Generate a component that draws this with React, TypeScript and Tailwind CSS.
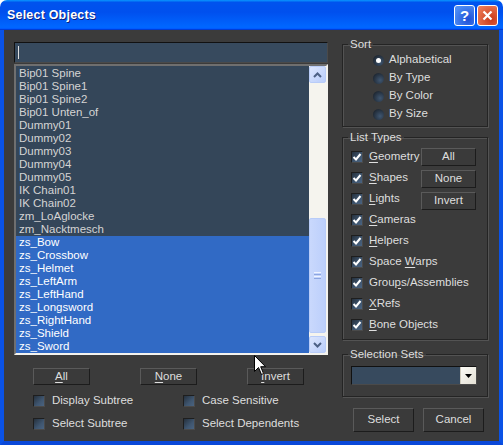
import React from "react";

const FONT = { fontFamily: '"Liberation Sans", Arial, sans-serif' };

const ITEMS = [
  "Bip01 Spine",
  "Bip01 Spine1",
  "Bip01 Spine2",
  "Bip01 Unten_of",
  "Dummy01",
  "Dummy02",
  "Dummy03",
  "Dummy04",
  "Dummy05",
  "IK Chain01",
  "IK Chain02",
  "zm_LoAglocke",
  "zm_Nacktmesch",
  "zs_Bow",
  "zs_Crossbow",
  "zs_Helmet",
  "zs_LeftArm",
  "zs_LeftHand",
  "zs_Longsword",
  "zs_RightHand",
  "zs_Shield",
  "zs_Sword",
];

const LIST_TYPES: [string, string, string][] = [
  ["", "G", "eometry"],
  ["", "S", "hapes"],
  ["", "L", "ights"],
  ["", "C", "ameras"],
  ["", "H", "elpers"],
  ["Space ", "W", "arps"],
  ["Grou", "p", "s/Assemblies"],
  ["", "X", "Refs"],
  ["", "B", "one Objects"],
];

function Btn({ children, className = "" }: { children: React.ReactNode; className?: string }) {
  return (
    <div
      className={
        "flex items-center justify-center bg-[#3a3a3a] border border-t-[#5a5a5a] border-l-[#5a5a5a] border-b-[#1c1c1c] border-r-[#1c1c1c] text-[11.5px] text-[#dedede] " +
        className
      }
    >
      {children}
    </div>
  );
}

function CheckBox({ checked }: { checked?: boolean }) {
  return (
    <div className="w-[12px] h-[12px] shrink-0 bg-[linear-gradient(135deg,#25303c,#3f5670_60%,#4a6380)] border border-t-[#1e1e1e] border-l-[#1e1e1e] border-b-[#4a4a4a] border-r-[#4a4a4a] flex items-center justify-center">
      {checked && (
        <svg width="10" height="10" viewBox="0 0 10 10">
          <path d="M1.5 5 L4 7.5 L8.5 2" stroke="#ffffff" strokeWidth="2" fill="none" />
        </svg>
      )}
    </div>
  );
}

function Radio({ on }: { on?: boolean }) {
  return (
    <div className="w-[11px] h-[11px] shrink-0 rounded-full bg-[radial-gradient(circle_at_65%_65%,#3f5670,#1f2833_75%)] flex items-center justify-center">
      {on && <div className="w-[5px] h-[5px] rounded-full bg-white" />}
    </div>
  );
}

function Group({ label, className = "", children }: { label: string; className?: string; children: React.ReactNode }) {
  return (
    <fieldset
      className={
        "min-w-0 w-[146px] border border-[#242424] shadow-[inset_1px_1px_0_#535353,1px_1px_0_#535353] " + className
      }
    >
      <legend className="ml-[5px] px-[2px] text-[11.5px] leading-[14px] text-[#dedede]">{label}</legend>
      {children}
    </fieldset>
  );
}

export default function App() {
  return (
    <div className="relative w-[503px] h-[445px] bg-white select-none overflow-hidden" style={FONT}>
      {/* Title bar */}
      <div className="h-[30px] rounded-t-[7px] bg-[linear-gradient(180deg,#0997ff,#0053ee_8%,#0050ee_40%,#0066ff_88%,#0066ff_93%,#005bff_95%,#003dd7_96%,#003dd7)] flex items-center pl-[7px] pr-[5px]">
        <span className="text-white font-bold text-[12.5px] tracking-[0.2px] [text-shadow:1px_1px_0_#0f1f7a]">
          Select Objects
        </span>
        <div className="ml-auto flex gap-[2px]">
          <div className="w-[21px] h-[21px] rounded-[3px] border border-white bg-[radial-gradient(circle_at_70%_70%,#1e4fd6,#4d8df5_80%)] flex items-center justify-center text-white font-bold text-[15px] leading-none">
            ?
          </div>
          <div className="w-[21px] h-[21px] rounded-[3px] border border-white bg-[radial-gradient(circle_at_70%_70%,#c8391a,#ec7a55_85%)] flex items-center justify-center">
            <svg width="11" height="11" viewBox="0 0 11 11">
              <path d="M1.5 1.5 L9.5 9.5 M9.5 1.5 L1.5 9.5" stroke="#ffffff" strokeWidth="2.2" />
            </svg>
          </div>
        </div>
      </div>

      {/* Body */}
      <div className="h-[415px] flex bg-[#3b3b3b] border-x-4 border-b-4 border-x-[#0a52e6] border-b-[#0a48d8]">
        {/* Left column */}
        <div className="w-[324px] pl-[10px] pt-[12px] flex flex-col">
          <div className="h-[21px] bg-[#374a5e] border border-t-[#111] border-l-[#111] border-b-[#4a4a4a] border-r-[#4a4a4a] flex items-center pl-[3px]">
            <div className="w-px h-[13px] bg-[#e0e0e0]" />
          </div>
          <div className="mt-[1px] h-[291px] border-2 border-t-[#6f6f6f] border-l-[#6f6f6f] border-b-[#f4f3ee] border-r-[#f4f3ee] flex">
            <div className="flex-1 bg-[#344659] pt-[1px]">
              {ITEMS.map((it, i) => (
                <div
                  key={it}
                  className={
                    "h-[13px] leading-[13px] pl-[3px] text-[11.5px] " +
                    (i >= 13 ? "bg-[#316ac5] text-white" : "text-[#d4d4d4]")
                  }
                >
                  {it}
                </div>
              ))}
            </div>
            <div className="w-[17px] bg-[#f5f4ee] flex flex-col">
              <div className="h-[17px] rounded-[2px] border border-[#b8ccf8] bg-[linear-gradient(135deg,#dce6fd,#b9cdfb)] flex items-center justify-center">
                <svg width="9" height="6" viewBox="0 0 9 6">
                  <path d="M1 5 L4.5 1.5 L8 5" stroke="#4d6185" strokeWidth="2" fill="none" />
                </svg>
              </div>
              <div className="h-[135px]" />
              <div className="h-[115px] rounded-[2px] border border-[#b8ccf8] bg-[linear-gradient(90deg,#c9d8fc,#bccffb)] flex flex-col items-center justify-center gap-[1px]">
                <div className="w-[7px] h-px bg-[#eef3ff]" />
                <div className="w-[7px] h-px bg-[#8ca5e0]" />
                <div className="w-[7px] h-px bg-[#eef3ff]" />
                <div className="w-[7px] h-px bg-[#8ca5e0]" />
              </div>
              <div className="flex-1" />
              <div className="h-[17px] rounded-[2px] border border-[#b8ccf8] bg-[linear-gradient(135deg,#dce6fd,#b9cdfb)] flex items-center justify-center">
                <svg width="9" height="6" viewBox="0 0 9 6">
                  <path d="M1 1 L4.5 4.5 L8 1" stroke="#4d6185" strokeWidth="2" fill="none" />
                </svg>
              </div>
            </div>
          </div>

          <div className="mt-[13px] pl-[19px] flex gap-[50px]">
            <Btn className="w-[57px] h-[17px]">
              <span className="underline underline-offset-2">A</span>ll
            </Btn>
            <Btn className="w-[57px] h-[17px]">
              <span className="underline underline-offset-2">N</span>one
            </Btn>
            <Btn className="w-[57px] h-[17px]">
              <span className="underline underline-offset-2">I</span>nvert
            </Btn>
          </div>

          <div className="mt-[7px] pl-[19px] grid grid-cols-[150px_1fr] gap-y-[6px] text-[11.5px] text-[#dedede]">
            <div className="h-[17px] flex items-center gap-[7px]">
              <CheckBox />
              <span>Display Subtree</span>
            </div>
            <div className="h-[17px] flex items-center gap-[7px]">
              <CheckBox />
              <span>Case Sensitive</span>
            </div>
            <div className="h-[17px] flex items-center gap-[7px]">
              <CheckBox />
              <span>Select Subtree</span>
            </div>
            <div className="h-[17px] flex items-center gap-[7px]">
              <CheckBox />
              <span>Select Dependents</span>
            </div>
          </div>
        </div>

        {/* Right column */}
        <div className="ml-[14px] w-[146px] pt-[7px] flex flex-col">
          <Group label="Sort" className="pb-[3px]">
            <div className="pl-[30px] text-[11.5px] text-[#dedede]">
              {["Alphabetical", "By Type", "By Color", "By Size"].map((s, i) => (
                <div key={s} className="h-[18px] flex items-center gap-[5px]">
                  <Radio on={i === 0} />
                  <span>{s}</span>
                </div>
              ))}
            </div>
          </Group>

          <Group label="List Types" className="mt-[3px] pb-[4px]">
            <div className="flex pl-[8px] pr-[11px] pt-[2px]">
              <div className="w-0 flex-1 flex flex-col text-[11.5px] text-[#dedede] whitespace-nowrap">
                {LIST_TYPES.map(([a, u, b]) => (
                  <div key={a + u + b} className="h-[21px] flex items-center gap-[6px]">
                    <CheckBox checked />
                    <span>
                      {a}
                      <span className="underline underline-offset-2">{u}</span>
                      {b}
                    </span>
                  </div>
                ))}
              </div>
              <div className="mt-[2px] flex flex-col gap-[4px]">
                <Btn className="w-[55px] h-[18px]">All</Btn>
                <Btn className="w-[55px] h-[18px]">None</Btn>
                <Btn className="w-[55px] h-[18px]">Invert</Btn>
              </div>
            </div>
          </Group>

          <Group label="Selection Sets" className="mt-[7px] pb-[11px]">
            <div className="pl-[8px] pr-[10px] pt-[5px]">
              <div className="h-[19px] bg-[#374a5e] border border-t-[#111] border-l-[#111] border-b-[#4a4a4a] border-r-[#4a4a4a] flex justify-end">
                <div className="w-[16px] h-full bg-[linear-gradient(135deg,#fbfaf5,#e3e0d4)] border-l border-[#cfcbbd] flex items-center justify-center">
                  <svg width="7" height="4" viewBox="0 0 7 4">
                    <path d="M0 0 L7 0 L3.5 4 Z" fill="#000" />
                  </svg>
                </div>
              </div>
            </div>
          </Group>

          <div className="mt-[11px] pl-[11px] flex gap-[9px]">
            <Btn className="w-[61px] h-[24px]">Select</Btn>
            <Btn className="w-[61px] h-[24px]">Cancel</Btn>
          </div>
        </div>
      </div>

      {/* Mouse cursor */}
      <svg className="absolute left-[254px] top-[355px]" width="13" height="21" viewBox="0 0 13 21">
        <path d="M0.5 0.5 L0.5 16.5 L4.5 12.5 L7.5 19.5 L9.5 18.5 L6.7 11.7 L11.5 11.7 Z" fill="#ffffff" stroke="#000000" strokeWidth="1" />
      </svg>
    </div>
  );
}
